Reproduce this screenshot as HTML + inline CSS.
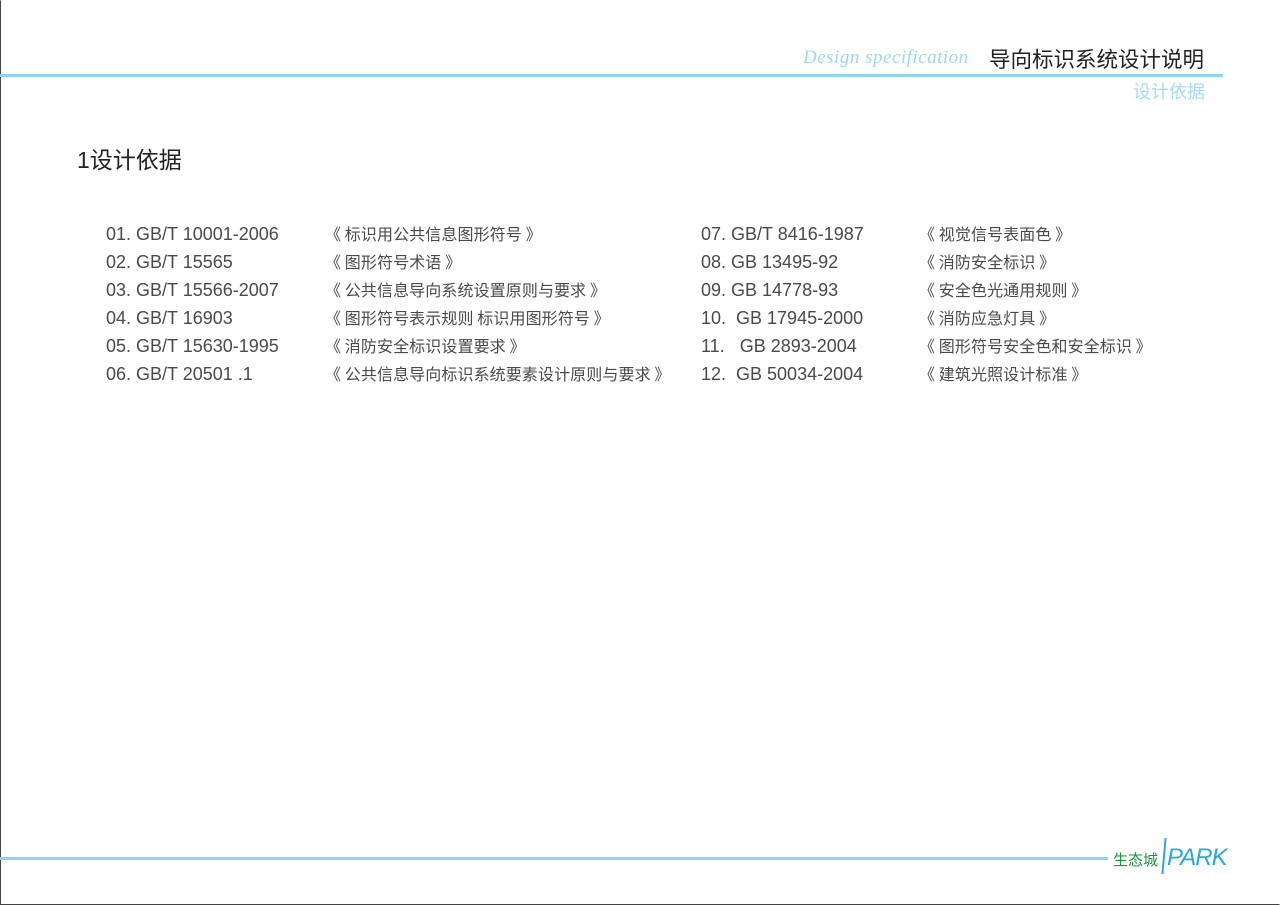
<!DOCTYPE html>
<html><head><meta charset="utf-8"><style>
html,body{margin:0;padding:0;background:#fff}
body{width:1280px;height:905px;position:relative;overflow:hidden;font-family:"Liberation Sans","Noto Sans CJK SC",sans-serif;}
.frame{position:absolute;left:0;top:0;width:1278px;height:903px;border:1px solid #444;border-right-color:#fff;border-top-color:#fff}
.t{position:absolute;white-space:nowrap;color:#3a3a3a}
.r{position:absolute;font-size:18px;color:#4a4a4a;white-space:nowrap;line-height:20px}
.c{position:absolute;font-size:16px;color:#4a4a4a;white-space:nowrap;line-height:20px;font-family:"Noto Sans CJK SC",sans-serif;letter-spacing:0.1px}
</style></head><body>
<div class="frame"></div>
<div class="t" style="left:803px;top:47px;font-family:'Liberation Serif',serif;font-style:italic;font-size:19px;color:#9fd6f2;letter-spacing:0.5px">Design specification</div>
<div class="t" style="left:989px;top:45px;font-size:21.5px;line-height:28px;color:#222;font-family:'Noto Sans CJK SC',sans-serif">导向标识系统设计说明</div>
<div style="position:absolute;left:0;top:74px;width:1223px;height:3px;background:#8fd3f3"></div>
<div class="t" style="left:1133px;top:79px;font-size:18px;line-height:24px;color:#a6dbf5;font-family:'Noto Sans CJK SC',sans-serif">设计依据</div>
<div class="t" style="left:77px;top:145px;font-size:23px;line-height:30px;color:#222">1设计依据</div>

<div class="r" style="left:106px;top:224px">01. GB/T 10001-2006</div>
<div class="r" style="left:106px;top:252px">02. GB/T 15565</div>
<div class="r" style="left:106px;top:280px">03. GB/T 15566-2007</div>
<div class="r" style="left:106px;top:308px">04. GB/T 16903</div>
<div class="r" style="left:106px;top:336px">05. GB/T 15630-1995</div>
<div class="r" style="left:106px;top:364px">06. GB/T 20501 .1</div>
<div class="c" style="left:325px;top:223px">《 标识用公共信息图形符号 》</div>
<div class="c" style="left:325px;top:251px">《 图形符号术语 》</div>
<div class="c" style="left:325px;top:279px">《 公共信息导向系统设置原则与要求 》</div>
<div class="c" style="left:325px;top:307px">《 图形符号表示规则 标识用图形符号 》</div>
<div class="c" style="left:325px;top:335px">《 消防安全标识设置要求 》</div>
<div class="c" style="left:325px;top:363px">《 公共信息导向标识系统要素设计原则与要求 》</div>

<div class="r" style="left:701px;top:224px">07. GB/T 8416-1987</div>
<div class="r" style="left:701px;top:252px">08. GB 13495-92</div>
<div class="r" style="left:701px;top:280px">09. GB 14778-93</div>
<div class="r" style="left:701px;top:308px">10.&nbsp; GB 17945-2000</div>
<div class="r" style="left:701px;top:336px">11.&nbsp;&nbsp; GB 2893-2004</div>
<div class="r" style="left:701px;top:364px">12.&nbsp; GB 50034-2004</div>
<div class="c" style="left:919px;top:223px">《 视觉信号表面色 》</div>
<div class="c" style="left:919px;top:251px">《 消防安全标识 》</div>
<div class="c" style="left:919px;top:279px">《 安全色光通用规则 》</div>
<div class="c" style="left:919px;top:307px">《 消防应急灯具 》</div>
<div class="c" style="left:919px;top:335px">《 图形符号安全色和安全标识 》</div>
<div class="c" style="left:919px;top:363px">《 建筑光照设计标准 》</div>

<div style="position:absolute;left:0;top:857px;width:1108px;height:3px;background:#8fd3f3"></div>
<div class="t" style="left:1113px;top:849px;font-size:15px;color:#1a9a3a">生态城</div>
<div style="position:absolute;left:1163px;top:838px;width:2px;height:36px;background:#2aa8e0;transform:rotate(5deg)"></div>
<div class="t" style="left:1167px;top:844px;font-size:24px;color:#2aa8e0;font-style:italic;letter-spacing:-1px">PARK</div>
</body></html>
